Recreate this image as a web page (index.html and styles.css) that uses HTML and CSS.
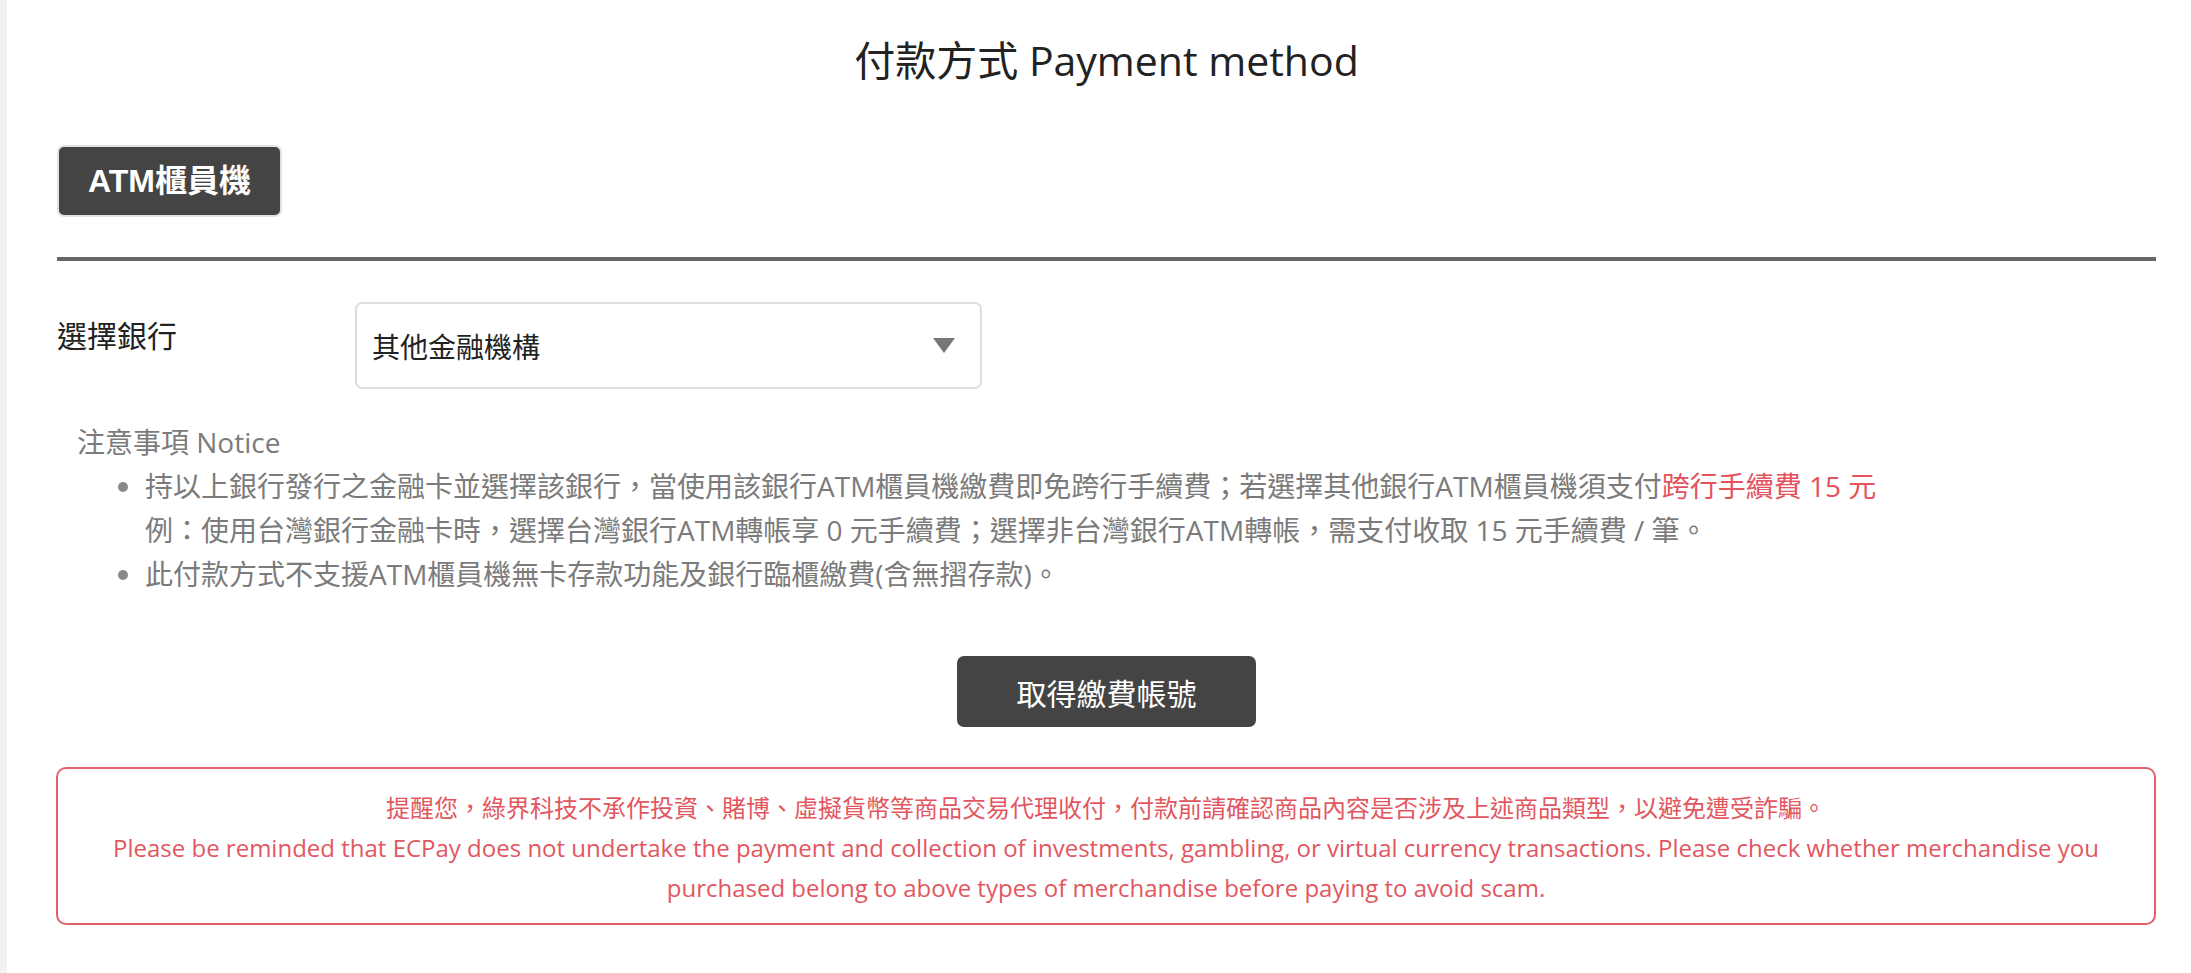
FILE: index.html
```html
<!DOCTYPE html>
<html lang="zh-Hant">
<head>
<meta charset="utf-8">
<title>付款方式 Payment method</title>
<link rel="stylesheet" href="styles.css">
</head>
<body>
<div class="page">
  <h1 class="page-title">付款方式 Payment method</h1>

  <div class="tabs">
    <button class="tab tab-active" type="button">ATM櫃員機</button>
  </div>
  <div class="divider"></div>

  <div class="form-row">
    <div class="form-label">選擇銀行</div>
    <div class="select">
      <span class="select-value">其他金融機構</span>
      <svg class="select-arrow" width="22" height="15" viewBox="0 0 22 15"><polygon points="0,0 22,0 11,15" fill="#777"/></svg>
    </div>
  </div>

  <div class="notice">
    <div class="notice-title">注意事項 Notice</div>
    <ul class="notice-list">
      <li>持以上銀行發行之金融卡並選擇該銀行，當使用該銀行ATM櫃員機繳費即免跨行手續費；若選擇其他銀行ATM櫃員機須支付<span class="hl">跨行手續費 15 元</span><br>例：使用台灣銀行金融卡時，選擇台灣銀行ATM轉帳享 0 元手續費；選擇非台灣銀行ATM轉帳，需支付收取 15 元手續費 / 筆。</li>
      <li>此付款方式不支援ATM櫃員機無卡存款功能及銀行臨櫃繳費(含無摺存款)。</li>
    </ul>
  </div>

  <div class="actions">
    <button class="btn-primary" type="button">取得繳費帳號</button>
  </div>

  <div class="alert">
    <p class="alert-zh">提醒您，綠界科技不承作投資、賭博、虛擬貨幣等商品交易代理收付，付款前請確認商品內容是否涉及上述商品類型，以避免遭受詐騙。</p>
    <p class="alert-en">Please be reminded that ECPay does not undertake the payment and collection of investments, gambling, or virtual currency transactions. Please check whether merchandise you purchased belong to above types of merchandise before paying to avoid scam.</p>
  </div>
</div>
</body>
</html>
```

FILE: styles.css
```css
* { box-sizing: border-box; }

html, body {
  margin: 0;
  padding: 0;
}

body {
  background: #f2f2f2;
  font-family: "Open Sans", "Noto Sans CJK TC", sans-serif;
  color: #222;
}

.page {
  margin-left: 7px;
  min-height: 100vh;
  background: #fff;
  padding: 29px 35px 40px 50px;
}

.page-title {
  margin: 0;
  text-align: center;
  font-size: 41px;
  line-height: 62px;
  font-weight: 400;
  color: #222;
}

.tabs {
  display: flex;
  margin-top: 54px;
}

.tab {
  font-family: "Liberation Sans", "Noto Sans CJK TC", sans-serif;
  font-size: 32px;
  font-weight: 700;
  line-height: 42px;
  padding: 13px 29px;
  border: 2px solid #e2e2e2;
  border-radius: 7px;
  background: #444;
  color: #fff;
  cursor: pointer;
}

.divider {
  margin-top: 40px;
  height: 4px;
  background: #666;
}

.form-row {
  display: flex;
  margin-top: 41px;
}

.form-label {
  width: 298px;
  flex: none;
  font-size: 30px;
  line-height: 45px;
  padding-top: 11px;
  color: #222;
}

.select {
  width: 627px;
  height: 87px;
  border: 2px solid #dedede;
  border-radius: 7px;
  display: flex;
  align-items: center;
  justify-content: space-between;
  padding: 0 25px 0 15px;
}

.select-value {
  font-size: 28px;
  color: #222;
}

.select-arrow {
  display: block;
}

.notice {
  margin-top: 31px;
  padding-left: 20px;
  color: #7b7b7b;
  font-size: 28px;
  line-height: 44px;
}

.notice-title {
  color: #7b7b7b;
}

.notice-list {
  margin: 0;
  padding-left: 68px;
}

.notice-list li::marker {
  color: #888;
}

.hl {
  color: #e4525d;
}

.actions {
  display: flex;
  justify-content: center;
  margin-top: 60px;
}

.btn-primary {
  width: 299px;
  height: 71px;
  border: none;
  border-radius: 7px;
  background: #444;
  color: #fff;
  font-family: "Open Sans", "Noto Sans CJK TC", sans-serif;
  font-size: 30px;
  cursor: pointer;
}

.alert {
  margin-top: 40px;
  margin-left: -1px;
  border: 2px solid #e0616d;
  border-radius: 10px;
  padding: 19px 40px 15px;
  text-align: center;
  color: #e2575f;
  line-height: 40px;
}

.alert p {
  margin: 0;
}

.alert-zh {
  font-size: 24px;
}

.alert-en {
  font-size: 24px;
}
```
